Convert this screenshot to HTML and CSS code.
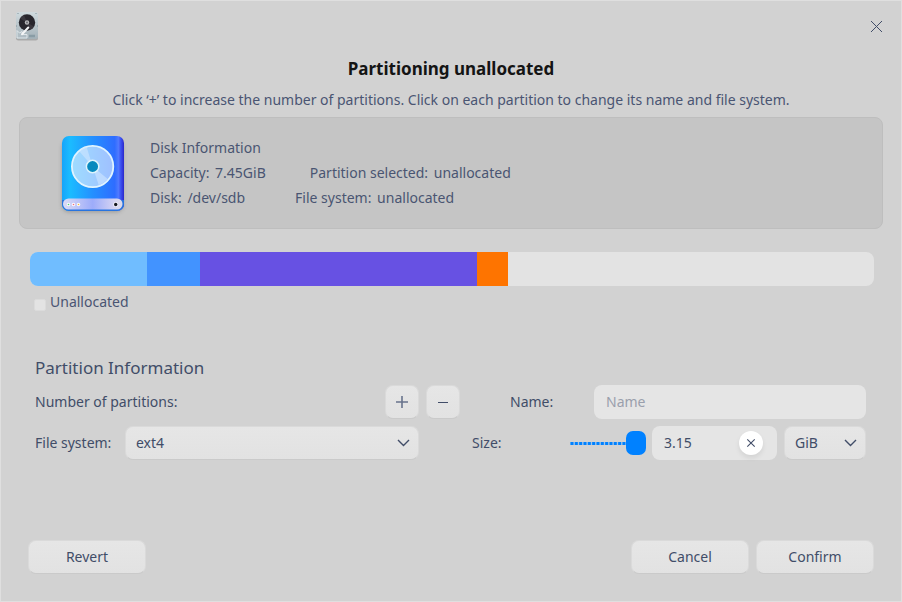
FILE: index.html
```html
<!DOCTYPE html>
<html lang="en">
<head>
<meta charset="utf-8">
<title>Partitioning unallocated</title>
<link rel="stylesheet" href="styles.css">
</head>
<body>
<main class="dialog">
  <header class="titlebar">
    <svg class="app-icon" width="24" height="30" viewBox="0 0 24 30">
      <defs>
        <linearGradient id="metal" x2="0" y2="1"><stop offset="0" stop-color="#d0dade"/><stop offset="1" stop-color="#a3b1b8"/></linearGradient>
      </defs>
      <rect x="1" y="2" width="22" height="27.500" rx="2.500" fill="#777" opacity=".45"/>
      <rect x="1" y="1" width="22" height="27" rx="2.500" fill="url(#metal)"/>
      <circle cx="12" cy="11.500" r="8.200" fill="#28262d"/>
      <path d="M12 11.500L5 7.500A8 8 0 0 1 9 4zM12 11.500L19 15.500A8 8 0 0 1 15 19z" fill="#4b4850" opacity=".5"/>
      <circle cx="12" cy="11.500" r="2.200" fill="#b9b9bb"/>
      <circle cx="12" cy="11.500" r=".9" fill="#64646a"/>
      <path d="M2 19.500l2.500 2.500 2.500-1.500 1 3h4v3.500H2z" fill="#b0bdc4" stroke="#e4ebee" stroke-width=".9"/>
      <path d="M13.300 16.500L7 23.200" stroke="#f5f6f7" stroke-width="2" stroke-linecap="round"/>
      <path d="M14 25h6" stroke="#899ca5" stroke-width="2.500"/>
      <path d="M2.500 2.500h1M20.500 2.500h1M1 15h1M22 15h1" stroke="#83949c"/>
    </svg>
    <svg class="close" width="13" height="13" viewBox="0 0 13 13"><path d="M1 1L12 12M12 1L1 12" stroke="#414d68" fill="none"/></svg>
  </header>
  <h1 class="title">Partitioning unallocated</h1>
  <p class="hint">Click ‘+’ to increase the number of partitions. Click on each partition to change its name and file system.</p>

  <section class="disk-card">
    <svg class="disk" width="70" height="84" viewBox="0 0 70 84">
      <defs>
        <linearGradient id="body"><stop offset="0" stop-color="#16a4fa"/><stop offset=".13" stop-color="#1bbcff"/><stop offset=".5" stop-color="#248fff"/><stop offset=".85" stop-color="#2e6dff"/><stop offset=".91" stop-color="#507aff"/><stop offset=".95" stop-color="#3b4ff0"/><stop offset="1" stop-color="#2b28cb"/></linearGradient>
        <linearGradient id="tray"><stop offset="0" stop-color="#dcdcf5"/><stop offset=".5" stop-color="#9dacfa"/><stop offset=".85" stop-color="#d3d2f3"/><stop offset="1" stop-color="#dfdce8"/></linearGradient>
        <linearGradient id="disc"><stop offset="0" stop-color="#9fdcff"/><stop offset="1" stop-color="#9fc0ff"/></linearGradient>
        <filter id="soft" x="-20%" y="-20%" width="140%" height="140%"><feGaussianBlur stdDeviation="2"/></filter>
      </defs>
      <rect x="4" y="8" width="61" height="71" rx="7" fill="#555" opacity=".4" filter="url(#soft)"/>
      <rect x="4" y="3" width="62" height="75" rx="7" fill="url(#body)"/>
      <path d="M4 67v4a7 7 0 0 0 7 7h48a7 7 0 0 0 7-7v-4z" fill="#2874df"/>
      <rect x="5" y="65.500" width="59.500" height="11" rx="5.500" fill="url(#tray)"/>
      <circle cx="34.600" cy="34" r="21.500" fill="#0867d8" opacity=".25"/>
      <circle cx="34.600" cy="33.500" r="20.700" fill="url(#disc)" stroke="#e0f4ff" stroke-width="1.800"/>
      <path d="M34.600 33.500L21 18a20 20 0 0 1 7.500-4.500zM34.600 33.500L40.700 52a20 20 0 0 0 9-6z" fill="#d0e6ff" opacity=".6"/>
      <circle cx="34.600" cy="33.500" r="6.200" fill="#0789be" stroke="#def4fc" stroke-width="1.500"/>
      <g fill="#fff"><circle cx="10.500" cy="71.500" r="1.700"/><circle cx="15.500" cy="71.500" r="1.700"/><circle cx="20.500" cy="71.500" r="1.700"/><circle cx="57.700" cy="71.500" r="2.500" opacity=".65"/></g>
      <circle cx="10.500" cy="71.500" r=".8" fill="#4bc879"/><circle cx="15.500" cy="71.500" r=".8" fill="#f16b82"/><circle cx="20.500" cy="71.500" r=".8" fill="#f0b637"/><circle cx="57.700" cy="71.500" r="1.700" fill="#161820"/>
    </svg>
    <div class="facts">
      <div>Disk Information</div>
      <div class="pair"><span class="fact">Capacity: <span>7.45GiB</span></span><span class="fact">Partition selected: <span>unallocated</span></span></div>
      <div class="pair pair-second"><span class="fact">Disk: <span>/dev/sdb</span></span><span class="fact">File system: <span>unallocated</span></span></div>
    </div>
  </section>

  <div class="usage">
    <i class="part part-sky"></i><i class="part part-blue"></i><i class="part part-violet"></i><i class="part part-orange"></i>
  </div>
  <div class="legend"><i class="swatch"></i><span>Unallocated</span></div>

  <h2 class="section-title">Partition Information</h2>
  <div class="form">
    <div class="row">
      <span class="count-label">Number of partitions:</span>
      <button class="button square"><svg width="14" height="14" viewBox="0 0 14 14"><path d="M7 1V13M1 7H13" stroke="#68738c" stroke-width="1.600"/></svg></button>
      <button class="button square"><svg width="14" height="14" viewBox="0 0 14 14"><path d="M2 7.500H12" stroke="#414d68"/></svg></button>
      <span class="name-label">Name:</span>
      <input class="field name" placeholder="Name">
    </div>
    <div class="row">
      <span class="fs-label">File system:</span>
      <button class="button select fs">ext4<svg width="14" height="10" viewBox="0 0 14 10"><path d="M1 2L6.500 7.500 12 2" fill="none" stroke="#414d68" stroke-width="1.400"/></svg></button>
      <span class="size-label">Size:</span>
      <span class="slider"><svg class="ticks" width="56" height="3" viewBox="0 0 56 3"><path d="M0 1.500H56" stroke="#a5c6e6" stroke-width="3"/><path d="M.5 1.500H56" stroke="#0081ff" stroke-width="3" stroke-dasharray="3 1.330"/></svg><i class="thumb"></i></span>
      <span class="field size">3.15<button class="clear"><svg width="10" height="10" viewBox="0 0 10 10"><path d="M1.300 1.300L8.700 8.700M8.700 1.300L1.300 8.700" stroke="#414d68" stroke-width="1.100"/></svg></button></span>
      <button class="button select unit">GiB<svg width="14" height="10" viewBox="0 0 14 10"><path d="M1 2L6.500 7.500 12 2" fill="none" stroke="#414d68" stroke-width="1.400"/></svg></button>
    </div>
  </div>

  <footer class="actions">
    <button class="button action">Revert</button>
    <span class="spacer"></span>
    <button class="button action">Cancel</button>
    <button class="button action">Confirm</button>
  </footer>
</main>
</body>
</html>
```
FILE: styles.css
```css
* { box-sizing: border-box; }
body { margin: 0; font: 14px/20px "Noto Sans", sans-serif; color: #414d68; }
svg { display: block; flex: none; }
button, input { font: inherit; color: inherit; margin: 0; }
.dialog { width: 902px; height: 602px; display: flex; flex-direction: column; background: #d2d2d2; border: 1px solid #dfdfdf; }
.titlebar { height: 50px; display: flex; justify-content: space-between; align-items: center; padding: 0 18px 0 14px; }
.title { margin: 5px 0 0; text-align: center; font-size: 17px; line-height: 25px; font-weight: 700; color: #141414; }
.hint { margin: 8px 0 0; text-align: center; line-height: 22px; color: #4a5572; }
.disk-card { height: 112px; margin: 6px 18px 0; display: flex; border: 1px solid #bebebe; border-radius: 8px; background: #c5c5c5; padding: 15px 38px 0; }
.facts { margin-left: 22px; padding-top: 2px; line-height: 25px; color: #4a5572; }
.pair { display: flex; gap: 44px; }
.pair-second { gap: 50px; }
.fact span { margin-left: 2px; }
.usage { height: 34px; margin: 23px 27px 0 29px; display: flex; overflow: hidden; border-radius: 8px; background: #e3e3e3; }
.part-sky { width: 117px; background: #70bdff; }
.part-blue { width: 53px; background: #4293ff; }
.part-violet { width: 277px; background: #6751e3; }
.part-orange { width: 31px; background: #fe7400; }
.legend { display: flex; margin: 6px 0 0 33px; gap: 4px; color: #4a5572; }
.swatch { width: 12px; height: 12px; margin-top: 7px; background: #e3e3e3; border: 1px solid #dbdbdb; border-radius: 2px; }
.section-title { margin: 43px 0 0 34px; font-size: 17px; line-height: 26px; font-weight: 400; }
.form { display: flex; flex-direction: column; gap: 7px; margin: 4px 35px 0 34px; }
.row { display: flex; align-items: center; height: 34px; }
.button { display: flex; align-items: center; justify-content: center; height: 34px; padding: 0; border: 1px solid #dadada; border-bottom-color: #cacaca; border-radius: 8px; background: linear-gradient(#e6e6e6, #e2e2e2); }
.square { width: 34px; margin-right: 7px; }
.count-label { width: 350px; }
.name-label { width: 84px; margin-left: 43px; }
.field { height: 34px; border: 0; border-radius: 8px; background: #e5e5e5; padding: 0 12px; }
.name { width: 272px; padding-bottom: 2px; }
.name::placeholder { color: #9a9fac; opacity: 1; }
.fs-label { width: 90px; }
.select { justify-content: space-between; padding: 0 7px 0 10px; }
.fs { width: 294px; }
.size-label { width: 98px; margin-left: 53px; }
.slider { display: flex; align-items: center; width: 76px; }
.thumb { width: 20px; height: 24px; border-radius: 7px; background: #0081ff; }
.size { width: 125px; margin-left: 6px; display: flex; align-items: center; justify-content: space-between; padding-right: 14px; }
.clear { width: 24px; height: 24px; display: flex; align-items: center; justify-content: center; border: 0; padding: 0; border-radius: 50%; background: #fff; box-shadow: 0 3px 5px rgba(0, 0, 0, .08); }
.unit { width: 82px; margin-left: 7px; }
.actions { display: flex; gap: 7px; margin: 80px 27px 0; }
.spacer { flex: 1; }
.action { width: 118px; }
```
